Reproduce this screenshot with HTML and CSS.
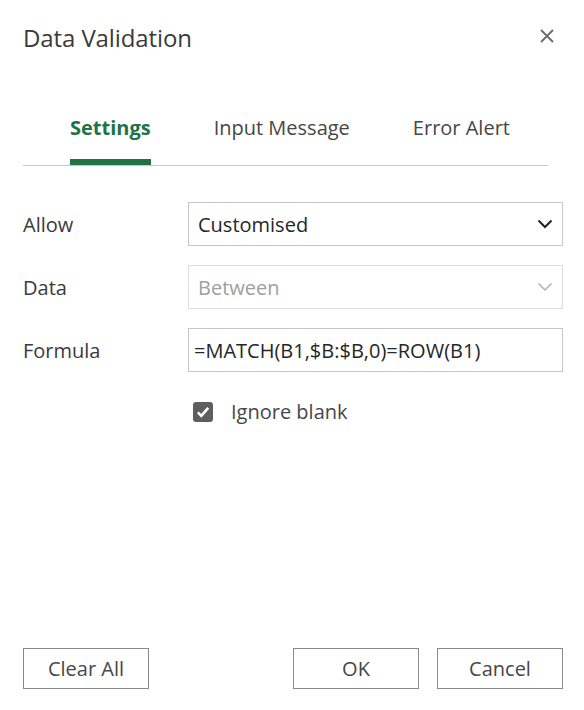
FILE: index.html
```html
<!DOCTYPE html>
<html>
<head>
<meta charset="utf-8">
<link rel="stylesheet" href="styles.css">
</head>
<body>
<div class="dialog">
  <div class="header">
    <div class="title">Data Validation</div>
    <svg class="close" width="16" height="16" viewBox="0 0 16 16"><path d="M2 2L14 14M14 2L2 14" stroke="#6b6b6b" stroke-width="1.8" fill="none"/></svg>
  </div>
  <div class="tabs">
    <div class="tab active">Settings</div>
    <div class="tab">Input Message</div>
    <div class="tab">Error Alert</div>
  </div>
  <div class="form">
    <div class="row">
      <div class="label">Allow</div>
      <div class="field">
        <span>Customised</span>
        <svg class="chev" width="16" height="10" viewBox="0 0 16 10"><path d="M1.5 1.5L8 8L14.5 1.5" stroke="#222" stroke-width="2" fill="none"/></svg>
      </div>
    </div>
    <div class="row">
      <div class="label">Data</div>
      <div class="field disabled">
        <span>Between</span>
        <svg class="chev" width="16" height="10" viewBox="0 0 16 10"><path d="M1.5 1.5L8 8L14.5 1.5" stroke="#b0b0b0" stroke-width="1.5" fill="none"/></svg>
      </div>
    </div>
    <div class="row">
      <div class="label">Formula</div>
      <div class="field formula"><span>=MATCH(B1,$B:$B,0)=ROW(B1)</span></div>
    </div>
    <div class="check-row">
      <span class="box"><svg width="16" height="16" viewBox="0 0 16 16"><path d="M2.8 8.3L6.3 11.8L13.2 3.8" stroke="#fff" stroke-width="2.6" fill="none"/></svg></span>
      <span>Ignore blank</span>
    </div>
  </div>
  <div class="footer">
    <div class="btn">Clear All</div>
    <div class="right">
      <div class="btn">OK</div>
      <div class="btn">Cancel</div>
    </div>
  </div>
</div>
</body>
</html>
```
FILE: styles.css
```css
html, body {
  margin: 0;
  padding: 0;
  background: #fff;
}
body {
  font-family: "Open Sans", "Noto Sans", sans-serif;
  color: #3a3a3a;
}
.dialog {
  width: 584px;
  height: 710px;
  box-sizing: border-box;
  padding: 0 21px 0 23px;
  display: flex;
  flex-direction: column;
}
.header {
  height: 74px;
  display: flex;
  justify-content: space-between;
  align-items: center;
}
.title {
  font-size: 24px;
  color: #3a3a3a;
  letter-spacing: -0.1px;
}
.close {
  margin-right: 8px;
  margin-top: -2px;
}
.tabs {
  margin-top: 33px;
  margin-right: 15px;
  display: flex;
  gap: 63px;
  padding-left: 47px;
  border-bottom: 1px solid #c8c8c8;
  height: 58px;
}
.tab {
  font-size: 20px;
  color: #474747;
  padding-top: 7px;
  box-sizing: border-box;
  height: 58px;
  border-bottom: 6px solid transparent;
}
.tab.active {
  color: #217346;
  font-weight: 700;
  border-bottom-color: #217346;
}
.form {
  margin-top: 36px;
  display: flex;
  flex-direction: column;
  gap: 19px;
}
.row {
  display: flex;
  align-items: center;
}
.label {
  width: 165px;
  font-size: 20px;
  color: #3a3a3a;
}
.field {
  flex: 1;
  height: 44px;
  box-sizing: border-box;
  border: 1px solid #c6c6c6;
  display: flex;
  align-items: center;
  justify-content: space-between;
  padding: 0 9px 0 9px;
  font-size: 20px;
  color: #262626;
}
.field.disabled {
  border-color: #dedede;
  color: #a0a0a0;
}
.field.formula {
  padding-left: 5px;
}
.check-row {
  margin-top: 7px;
  margin-left: 170px;
  display: flex;
  align-items: center;
  gap: 18px;
  font-size: 20px;
  color: #474747;
}
.box {
  width: 20px;
  height: 20px;
  border-radius: 3px;
  background: #5e5e5e;
  display: flex;
  align-items: center;
  justify-content: center;
}
.footer {
  margin-top: auto;
  margin-bottom: 21px;
  display: flex;
  justify-content: space-between;
}
.right {
  display: flex;
  gap: 18px;
}
.btn {
  width: 126px;
  height: 41px;
  box-sizing: border-box;
  border: 1px solid #8a8a8a;
  display: flex;
  align-items: center;
  justify-content: center;
  font-size: 20px;
  color: #474747;
}
```
